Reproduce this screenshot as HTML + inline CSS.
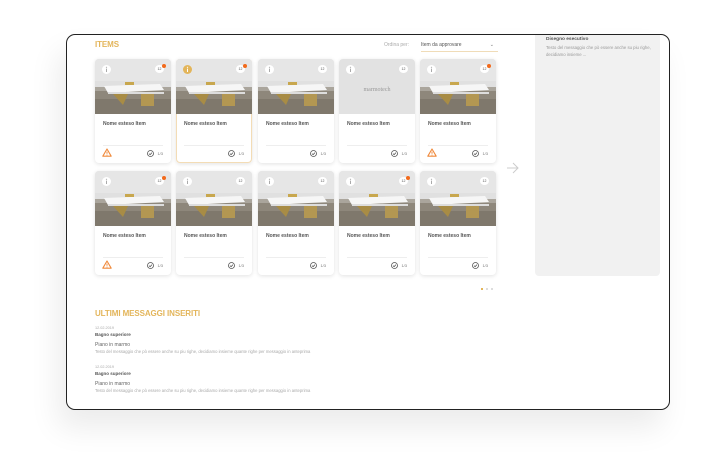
<!DOCTYPE html>
<html><head><meta charset="utf-8"><style>
*{margin:0;padding:0;box-sizing:border-box}
body{width:705px;height:476px;background:#fff;font-family:"Liberation Sans",sans-serif;position:relative;overflow:hidden}
.frame{position:absolute;left:66px;top:34px;width:604px;height:376px;border:1.3px solid #222;border-radius:9px;background:#fff;box-shadow:-8px 18px 30px rgba(0,0,0,.08);overflow:hidden}
.abs{position:absolute}
.title{color:#e3b55a;font-weight:bold;font-size:8px;letter-spacing:-.1px}
.card{position:absolute;width:76px;height:104px;background:#fff;border-radius:4px;box-shadow:0 1px 4px rgba(0,0,0,.12);overflow:hidden}
.card.sel{box-shadow:inset 0 0 0 1px #f3dcb5,0 1px 4px rgba(0,0,0,.12)}
.card svg{display:block}
.name{position:absolute;left:8px;top:62px;font-size:5px;font-weight:bold;color:#555}
.div{position:absolute;left:8px;right:8px;top:86px;border-top:1px solid #eee}
.cnt{position:absolute;right:8px;top:91.5px;font-size:4px;color:#777}
.ic{position:absolute}
.bub{position:absolute;right:7px;top:6px;width:9px;height:8px;border-radius:50%;background:#fff;font-size:3.5px;color:#555;text-align:center;line-height:8px}
.dot{position:absolute;right:5px;top:5px;width:4px;height:4px;border-radius:50%;background:#f26a1b}
.msg{position:absolute;left:28px;font-size:4.5px;color:#888}
</style></head><body>
<div class="frame">
 <div class="abs title" style="left:28px;top:5px">ITEMS</div>
 <div class="abs" style="left:317px;top:7px;font-size:5px;color:#aaa">Ordina per:</div>
 <div class="abs" style="left:354px;top:7px;font-size:5px;color:#555;width:77px;border-bottom:1px solid #f0dcb8;padding-bottom:3px">Item da approvare<span style="float:right;margin-right:4px;color:#777">⌄</span></div>
 <div class="abs" style="left:468px;top:-2px;width:125px;height:243px;background:#f1f1f1;border-radius:0 0 4px 4px"></div>
 <div class="abs" style="left:479px;top:2px;font-size:4.8px;font-weight:bold;color:#555">Disegno esecutivo</div>
 <div class="abs" style="left:479px;top:10px;width:110px;font-size:4.3px;color:#999;line-height:6.5px">Testo del messaggio che pò essere anche su piu righe, decidiamo insieme ...</div>
 <svg class="abs" style="left:439px;top:127px" width="14" height="12"><path d="M1 6H12M7 1L12 6L7 11" fill="none" stroke="#ccc" stroke-width="1"/></svg>
 <div class="abs" style="left:414px;top:253px;width:2px;height:2px;background:#e3b55a"></div>
 <div class="abs" style="left:419px;top:253px;width:2px;height:2px;background:#ddd"></div>
 <div class="abs" style="left:424px;top:253px;width:2px;height:2px;background:#ddd"></div>
 <div class="abs title" style="left:28px;top:274px">ULTIMI MESSAGGI INSERITI</div>
 <div class="msg" style="top:291px;font-size:3.8px;color:#aaa">12.02.2019</div>
 <div class="msg" style="top:297px;font-weight:bold;color:#555">Bagno superiore</div>
 <div class="msg" style="top:307px;font-size:5px;color:#666">Piano in marmo</div>
 <div class="msg" style="top:314px;font-size:4.2px;color:#aaa">Testo del messaggio che pò essere anche su piu righe, decidiamo insieme quante righe per messaggio in anteprima</div>
 <div class="msg" style="top:330px;font-size:3.8px;color:#aaa">12.02.2019</div>
 <div class="msg" style="top:336px;font-weight:bold;color:#555">Bagno superiore</div>
 <div class="msg" style="top:346px;font-size:5px;color:#666">Piano in marmo</div>
 <div class="msg" style="top:353px;font-size:4.2px;color:#aaa">Testo del messaggio che pò essere anche su piu righe, decidiamo insieme quante righe per messaggio in anteprima</div>
</div>
<div id="cards"></div>
<script>
var xs=[95,176,258,339,420],ys=[59,171];
var img='<svg width="76" height="55"><rect width="76" height="55" fill="#e0e0e0"/><rect y="0" width="76" height="22" fill="#e6e6e6"/><rect y="30" width="76" height="25" fill="#8e877b"/><rect y="40" width="76" height="15" fill="#7f786c"/><rect y="28" width="76" height="4" fill="#aaa59c"/><polygon points="9,27 65,25 69,31 13,34" fill="#f6f6f6"/><rect x="13" y="33" width="56" height="2" fill="#ddd"/><rect x="30" y="23" width="9" height="3" fill="#c8a74e"/><polygon points="18,35 33,35 28,46" fill="#a88c45"/><rect x="46" y="35" width="13" height="12" fill="#b39752"/></svg>';
var blank='<svg width="76" height="55"><rect width="76" height="55" fill="#e2e2e2"/><text x="38" y="32" font-family="Liberation Serif" font-size="6" fill="#999" text-anchor="middle">marmotech</text></svg>';
var h='';
for(var r=0;r<2;r++)for(var c=0;c<5;c++){
 var sel=(r==0&&c==1),bl=(r==0&&c==3),dot=(r==0&&(c<2||c==4))||(r==1&&(c==0||c==3)),w=(c==0||(r==0&&c==4));
 var info='<svg class="ic" style="left:7px;top:6px" width="9" height="9"><circle cx="4.5" cy="4.5" r="4.5" fill="'+(sel?'#e3b55a':'#fff')+'"/><path d="M4.5 3.6V7" stroke="'+(sel?'#fff':'#aaa')+'" stroke-width="1"/><circle cx="4.5" cy="2.3" r=".6" fill="'+(sel?'#fff':'#aaa')+'"/></svg>';
 var ck='<svg class="ic" style="right:17px;top:90.5px" width="7" height="7"><circle cx="3.5" cy="3.5" r="3" fill="none" stroke="#555" stroke-width=".8"/><path d="M2 3.6L3.1 4.7L5 2.6" fill="none" stroke="#555" stroke-width=".8"/></svg>';
 var warn=w?'<svg class="ic" style="left:7px;top:89px" width="10" height="9"><path d="M5 1L9.2 8.2H0.8Z" fill="none" stroke="#f08a3c" stroke-width="1.1" stroke-linejoin="round"/><path d="M5 3.6V5.8" stroke="#f08a3c" stroke-width="1"/><circle cx="5" cy="7" r=".5" fill="#f08a3c"/></svg>':'';
 h+='<div class="card'+(sel?' sel':'')+'" style="left:'+xs[c]+'px;top:'+ys[r]+'px">'+(bl?blank:img)+
 info+'<div class="bub">12</div>'+(dot?'<div class="dot"></div>':'')+
 '<div class="name">Nome esteso Item</div><div class="div"></div>'+warn+ck+'<div class="cnt">1/3</div></div>';
}
document.getElementById('cards').innerHTML=h;
</script>
</body></html>
